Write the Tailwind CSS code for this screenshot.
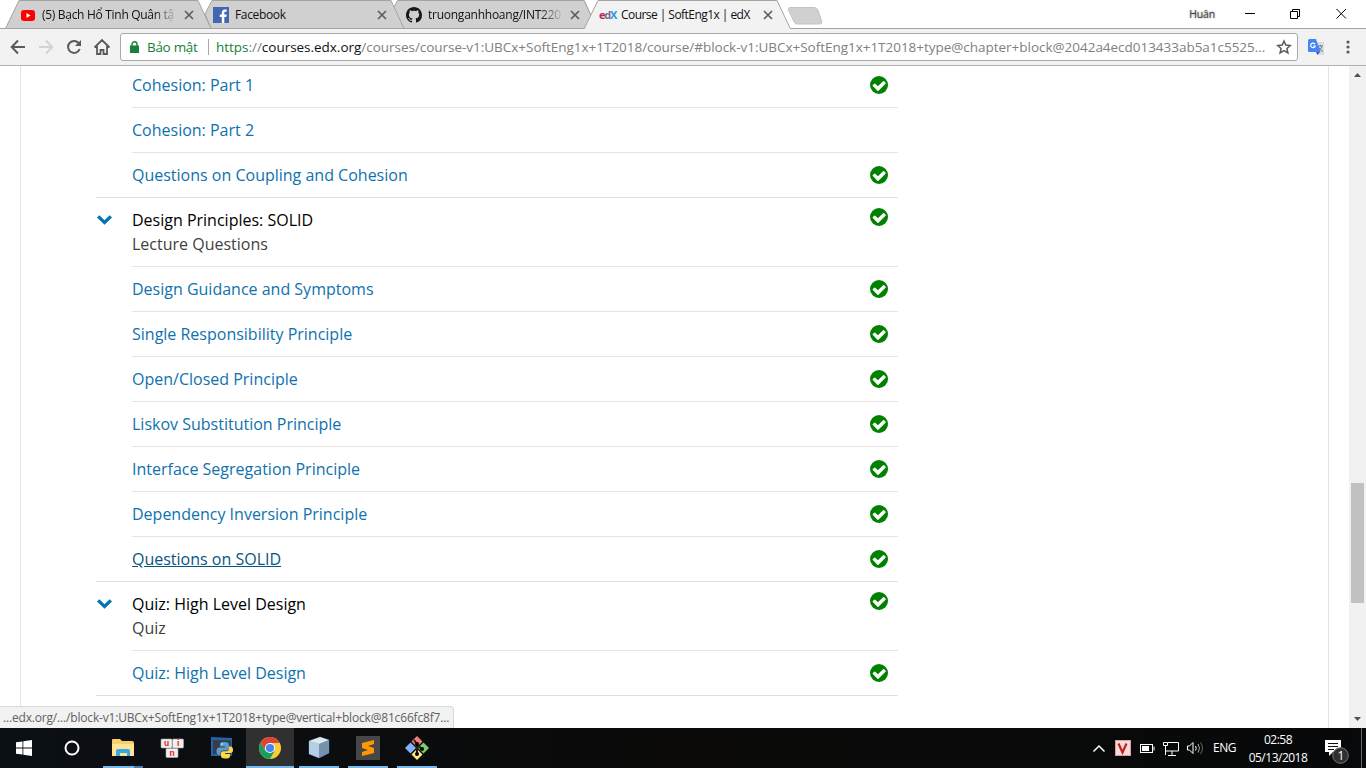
<!DOCTYPE html>
<html lang="en">
<head>
<meta charset="utf-8">
<title>Course | SoftEng1x | edX</title>
<script src="https://cdn.jsdelivr.net/npm/@tailwindcss/browser@4"></script>
</head>
<body class="w-[1366px] h-[768px] overflow-hidden bg-white font-['Open_Sans','Noto_Sans',sans-serif] flex flex-col">
<svg class="hidden">
  <symbol id="done" viewBox="0 0 1536 1536"><circle cx="768" cy="768" r="768" fill="#008100"/><path fill="#fff" d="M1344 606q0-28-18-46l-121-120q-19-19-45-19t-45 19l-438 437-226-226q-19-19-45-19t-45 19l-121 120q-18 18-18 46 0 27 18 45l392 392q19 19 45 19 27 0 46-19l603-603q18-18 18-45z"/></symbol>
  <symbol id="chev" viewBox="0 0 15 10"><path fill="#0075b4" d="M0 2.600L2.300.300 7.500 5.300 12.700.300 15 2.600 7.500 9.700z"/></symbol>
  <symbol id="x" viewBox="0 0 10 10"><path d="M1 1l8 8M9 1L1 9" stroke="#5a5a5a" stroke-width="1.600" fill="none"/></symbol>
</svg>

<!-- Tab strip -->
<header class="relative h-[29px] shrink-0">
  <svg class="absolute left-0 top-0" width="1366" height="29" stroke="#a3a3a3" fill="#d0d0d0">
    <path d="M391.500 28.500L405 .500H584L597 28.500"/>
    <path d="M390.500 14L397.500 .500H584L597 28.500H397.500z"/>
    <path d="M205 14L212 .500H391L404 28.500H211z"/>
    <path d="M5.500 28.500L19 .500H198L211 28.500"/>
    <path d="M0 28.500H1366"/>
    <path d="M584 29L598 .500H777L790.500 29" fill="#f2f2f2"/>
    <path d="M585 28.500H790" stroke="#f2f2f2"/>
    <path d="M790 7.500H814Q817 7.500 818 10L822 22Q822 24 820 24H797Q795 24 794 22L788.500 10Q788 7.500 790 7.500z" stroke="#c4c4c4"/>
  </svg>
  <div class="relative flex h-[29px] text-[12px] leading-[29px] text-[#111] whitespace-nowrap">
    <div class="flex items-center w-[193px] ml-[20px]">
      <svg class="w-4 h-4 shrink-0" viewBox="0 0 16 16"><rect x="1" y="3" width="14" height="11" rx="3" fill="#f00"/><path d="M6.500 6v5l4-2.500z" fill="#fff"/></svg>
      <span class="ml-[6px] w-[136px] tracking-[-0.3px] [mask-image:linear-gradient(to_right,#000_112px,transparent_136px)]">(5) Bạch Hổ Tinh Quân tậ</span>
      <svg class="w-[10px] h-[10px] ml-[6px]"><use href="#x"/></svg>
    </div>
    <div class="flex items-center w-[193px]">
      <svg class="w-4 h-4 shrink-0" viewBox="0 0 16 16"><path fill="#4267b2" d="M0 0h16v16H0z"/><path fill="#fff" d="M8.800 16V10H6.800V7.500h2V5.800C8.800 3.700 10 2.500 12 2.500h1.700v2.200h-1.200c-1 0-1.200.500-1.200 1.200v1.600h2.400L13.300 10h-2v6z"/></svg>
      <span class="ml-[6px] w-[136px] tracking-[-0.35px]">Facebook</span>
      <svg class="w-[10px] h-[10px] ml-[6px]"><use href="#x"/></svg>
    </div>
    <div class="flex items-center w-[193px]">
      <svg class="w-4 h-4 shrink-0" viewBox="0 0 16 16"><path fill="#191717" d="M8 0C3.580 0 0 3.580 0 8c0 3.540 2.290 6.530 5.470 7.590.400.070.550-.170.550-.380 0-.190-.010-.820-.010-1.490-2.010.370-2.530-.490-2.690-.940-.090-.230-.480-.940-.820-1.130-.280-.150-.680-.520-.010-.530.630-.010 1.080.580 1.230.820.720 1.210 1.870.870 2.330.660.070-.520.280-.870.510-1.070-1.780-.200-3.640-.890-3.640-3.950 0-.870.310-1.590.820-2.150-.080-.200-.360-1.020.080-2.120 0 0 .670-.210 2.200.820.640-.180 1.320-.270 2-.270s1.360.090 2 .270c1.530-1.040 2.200-.820 2.200-.820.440 1.100.160 1.920.080 2.120.510.560.820 1.270.820 2.150 0 3.070-1.870 3.750-3.650 3.950.290.250.540.730.540 1.480 0 1.070-.010 1.930-.010 2.200 0 .210.150.460.550.380A8.010 8.010 0 0 0 16 8c0-4.420-3.580-8-8-8z"/></svg>
      <span class="ml-[6px] w-[136px] tracking-[-0.25px] [mask-image:linear-gradient(to_right,#000_112px,transparent_136px)]">truonganhhoang/INT220</span>
      <svg class="w-[10px] h-[10px] ml-[6px]"><use href="#x"/></svg>
    </div>
    <div class="flex items-center w-[193px]">
      <span class="w-4 h-4 leading-[15px] text-[11px] font-bold tracking-[-1.3px] text-[#b72667]">e<span class="text-[#7b6c86]">d</span><span class="text-[#1b9be8]">X</span></span>
      <span class="ml-[6px] w-[136px] tracking-[-0.55px]">Course | SoftEng1x | edX</span>
      <svg class="w-[10px] h-[10px] ml-[6px]"><use href="#x"/></svg>
    </div>
    <div class="flex items-center ml-auto mr-[17px] h-[27px]">
      <span class="text-[10.5px] text-[#444] tracking-[-0.15px] mr-[30px] mt-px [text-shadow:0_0_2px_#777]">Huân</span>
      <svg width="104" height="12" viewBox="0 0 104 12" fill="none" stroke="#000"><path d="M0 5.500h10M45.500 3.500h7v7h-7zM47.500 3V1.500h7v7H53M91.500 1l9.500 9.500M101 1l-9.500 9.500"/></svg>
    </div>
  </div>
</header>

<!-- Toolbar -->
<div class="h-[37px] shrink-0 bg-[#f2f2f2] border-b border-[#b2b2b2] flex items-center">
  <svg width="120" height="36" viewBox="0 29 120 36" fill="none" stroke="#5a5a5a" stroke-width="2">
    <path d="M25 47H12M18 40.500L11.700 47l6.300 6.500"/>
    <path d="M39 47h13M46 40.500l6.300 6.500-6.300 6.500" stroke="#d3d3d3"/>
    <path d="M79 43.500A6 6 0 1 0 79.700 49"/><path d="M81 40v6h-6z" fill="#5a5a5a" stroke="none"/>
    <path d="M94.500 47.500L102 40l7.500 7.500M97 46v8h3.500v-4h3v4h3.500v-8" stroke-width="1.800"/>
  </svg>
  <div class="w-[1178px] h-[28px] bg-white border border-[#a9a9a9] rounded-[3px] flex items-center text-[13.500px] whitespace-nowrap">
    <svg class="ml-[9px]" width="9" height="12" viewBox="0 0 9 12"><path fill="#188038" d="M0 4.500h9V12H0z"/><path d="M2 5V3.200a2.500 2.500 0 0 1 5 0V5" fill="none" stroke="#188038" stroke-width="1.400"/></svg>
    <span class="ml-[8px] w-[52px] text-[#188038] tracking-[-0.3px]">Bảo mật</span>
    <span class="ml-[9px] w-px h-4 bg-[#a8a8a8]"></span>
    <span class="ml-[7px] w-[1050px] text-[#808080] tracking-[-0.025px]"><span class="text-[#188038]">https</span>://<span class="text-[#111]">courses.edx.org</span>/courses/course-v1:UBCx+SoftEng1x+1T2018/course/#block-v1:UBCx+SoftEng1x+1T2018+type@chapter+block@2042a4ecd013433ab5a1c5525...</span>
    <svg class="ml-[10px]" width="16" height="16" viewBox="0 0 16 16"><path d="M8 2l1.800 4.100 4.500.400-3.400 3 1 4.400L8 11.600l-3.900 2.300 1-4.400-3.400-3 4.500-.400z" fill="none" stroke="#5a5a5a" stroke-width="1.500"/></svg>
  </div>
  <svg class="ml-[10px]" width="16" height="16" viewBox="0 0 16 16"><path d="M6 3h10v13H9z" fill="#dcdcdc"/><path d="M0 1.500Q0 0 1.500 0H8l4.500 13H1.500Q0 13 0 11.500z" fill="#4285f4"/><path d="M8 13h4l-2.500 3z" fill="#3b50c5"/><path d="M7 5.200a2.300 2.300 0 1 0 .200 1.800H5.200" stroke="#fff" stroke-width="1.200" fill="none"/><path d="M10 7h5M12.500 6v1M14 7.500q-1 3-3.500 4.500M11 8.500q1 2.500 4 4" stroke="#607d9b" fill="none"/></svg>
  <svg class="ml-[22px]" width="4" height="14" viewBox="0 0 4 14" fill="#5a5a5a"><circle cx="2" cy="2" r="1.600"/><circle cx="2" cy="7" r="1.600"/><circle cx="2" cy="12" r="1.600"/></svg>
</div>

<!-- Page -->
<main class="relative h-[662px] shrink-0 overflow-hidden flex">
  <div class="ml-[20px] w-[1309px] border-x border-[#e3e3e3] pl-[75px]">
    <div class="w-[802px] -mt-[3px] text-[16px] leading-6 text-[#0e72ae]">
      <section class="border-b border-[#e0e0e0]">
        <ul class="ml-[36px] divide-y divide-[#e5e5e5]">
          <li class="h-[45px] flex items-center justify-between pr-[10px]"><a>Cohesion: Part 1</a><svg class="w-[18px] h-[18px]"><use href="#done"/></svg></li>
          <li class="h-[45px] flex items-center"><a>Cohesion: Part 2</a></li>
          <li class="h-[44px] flex items-center justify-between pr-[10px]"><a>Questions on Coupling and Cohesion</a><svg class="w-[18px] h-[18px]"><use href="#done"/></svg></li>
        </ul>
      </section>
      <section class="border-b border-[#e0e0e0]">
        <div class="flex h-[68px] pt-[10px]">
          <svg class="w-[15px] h-[10px] mt-[7px] ml-[1px] mr-[20px]"><use href="#chev"/></svg>
          <div class="flex-1 text-[#414141]"><h3 class="text-black">Design Principles: SOLID</h3><p>Lecture Questions</p></div>
          <svg class="w-[18px] h-[18px] mr-[10px]"><use href="#done"/></svg>
        </div>
        <ul class="ml-[36px] border-t border-[#e5e5e5] divide-y divide-[#e5e5e5]">
          <li class="h-[45px] flex items-center justify-between pr-[10px]"><a>Design Guidance and Symptoms</a><svg class="w-[18px] h-[18px]"><use href="#done"/></svg></li>
          <li class="h-[45px] flex items-center justify-between pr-[10px]"><a>Single Responsibility Principle</a><svg class="w-[18px] h-[18px]"><use href="#done"/></svg></li>
          <li class="h-[45px] flex items-center justify-between pr-[10px]"><a>Open/Closed Principle</a><svg class="w-[18px] h-[18px]"><use href="#done"/></svg></li>
          <li class="h-[45px] flex items-center justify-between pr-[10px]"><a>Liskov Substitution Principle</a><svg class="w-[18px] h-[18px]"><use href="#done"/></svg></li>
          <li class="h-[45px] flex items-center justify-between pr-[10px]"><a>Interface Segregation Principle</a><svg class="w-[18px] h-[18px]"><use href="#done"/></svg></li>
          <li class="h-[45px] flex items-center justify-between pr-[10px]"><a>Dependency Inversion Principle</a><svg class="w-[18px] h-[18px]"><use href="#done"/></svg></li>
          <li class="h-[44px] flex items-center justify-between pr-[10px]"><a class="underline text-[#065683]">Questions on SOLID</a><svg class="w-[18px] h-[18px]"><use href="#done"/></svg></li>
        </ul>
      </section>
      <section class="border-b border-[#e0e0e0]">
        <div class="flex h-[68px] pt-[10px]">
          <svg class="w-[15px] h-[10px] mt-[7px] ml-[1px] mr-[20px]"><use href="#chev"/></svg>
          <div class="flex-1 text-[#414141]"><h3 class="text-black">Quiz: High Level Design</h3><p>Quiz</p></div>
          <svg class="w-[18px] h-[18px] mr-[10px]"><use href="#done"/></svg>
        </div>
        <ul class="ml-[36px] border-t border-[#e5e5e5]">
          <li class="h-[44px] flex items-center justify-between pr-[10px]"><a>Quiz: High Level Design</a><svg class="w-[18px] h-[18px]"><use href="#done"/></svg></li>
        </ul>
      </section>
    </div>
  </div>
  <div class="ml-auto w-[17px] bg-[#f1f1f1] flex flex-col items-center">
    <svg class="mt-[7px]" width="7" height="4"><path d="M0 4L3.500 0 7 4z" fill="#505050"/></svg>
    <div class="mt-[406px] w-[13px] h-[120px] bg-[#c1c1c1]"></div>
    <svg class="mt-auto mb-[7px]" width="7" height="4"><path d="M0 0h7L3.500 4z" fill="#505050"/></svg>
  </div>
  <div class="absolute left-0 bottom-0 w-[454px] h-[22px] bg-[#f2f2f2] border-t border-r border-[#d8d8d8] rounded-tr-[4px] pl-[3px] text-[12px] leading-[22px] text-[#606060] whitespace-nowrap tracking-[-0.175px]">...edx.org/.../block-v1:UBCx+SoftEng1x+1T2018+type@vertical+block@81c66fc8f7...</div>
</main>

<!-- Taskbar -->
<footer class="h-[40px] shrink-0 bg-gradient-to-r from-[#0b1015] via-[#0a0908] to-[#07090a] flex text-white">
  <div class="w-12 flex items-center justify-center"><svg width="16" height="16" viewBox="0 0 16 16" fill="#fff"><path d="M0 2.300L6.500 1.400V7.600H0zM7.300 1.300L16 0V7.600H7.300zM0 8.400H6.500V14.600L0 13.700zM7.300 8.400H16V16L7.300 14.700z"/></svg></div>
  <div class="w-12 flex items-center justify-center"><svg width="16" height="16"><circle cx="8" cy="8" r="6.500" fill="none" stroke="#fff" stroke-width="2"/></svg></div>
  <div class="w-[54px] relative flex items-center justify-center"><svg class="mt-[-1px]" width="22" height="20" viewBox="0 0 22 20"><path d="M0 2Q0 1 1 1H8L10 3H20Q22 3 22 5V18H0z" fill="#f7cf6b"/><path d="M0 6H22V18H0z" fill="#ffe394"/><path d="M4 18V13Q4 11 6 11H16Q18 11 18 13V18H15V15H8V18z" fill="#35a9e4"/></svg><span class="absolute left-[7px] bottom-0 w-[40px] h-[2px] bg-[linear-gradient(to_right,#76b9ed_31px,#4e7ea5_31px)]"></span></div>
  <div class="w-[44px] flex items-center justify-center"><svg width="24" height="20" viewBox="0 0 24 20"><g fill="#efefef" stroke="#aaa" stroke-width=".6"><rect x="1" y="1" width="11" height="9" rx="1"/><rect x="12.500" y="1" width="11" height="9" rx="1"/><rect x="6" y="10.500" width="12" height="9" rx="1"/></g><g fill="#e02424" class="font-['Liberation_Sans']" font-weight="bold" font-size="8.500"><text x="4" y="8">u</text><text x="17" y="8">i</text><text x="9.500" y="17.500">n</text></g></svg></div>
  <div class="w-[52px] flex items-center justify-center"><svg class="ml-[3px] mt-[-2px]" width="24" height="24" viewBox="0 0 24 24"><path d="M1 2l21 1v18L1 21z" fill="#2463a8"/><path d="M3 5l18 .500V19L3 19z" fill="#333e48"/><path d="M14 7c-4 0-4 1.500-4 3v1.500h5v1H9c-2 0-2.500 2-2.500 4s1 3.500 2.500 3.500h1.500v-2c0-1.500 1-2.500 2.500-2.500h4c1.500 0 2-1 2-2.200V10c0-2-1-3-5-3z" fill="#5b9bd0"/><path d="M16 23.500c4 0 4-1.500 4-3V19h-5v-1h5.500c2 0 2.500-1.500 2.500-3s-.500-3.500-2.500-3.500H19v2.300c0 1.500-1 2.500-2.500 2.500h-3.500c-1.500 0-2 1-2 2v2.500c0 2 1 2.700 5 2.700z" fill="#ffd845"/><circle cx="12" cy="9" r=".8" fill="#fff"/></svg></div>
  <div class="w-[48px] bg-[#303030] border-b-2 border-[#76b9ed] flex items-center justify-center"><svg class="mt-[1px]" width="22" height="22" viewBox="-11 -11 22 22"><circle r="11" fill="#f9cc3a"/><path d="M-9.500-5.500A11 11 0 0 0 0 11L4.700 2.700-4.700 2.700z" fill="#1a9f5b"/><path d="M-9.500-5.500A11 11 0 0 1 9.500-5.500L9.800-5H0L-4.300 3z" fill="#dc4437"/><circle r="5.100" fill="#fff"/><circle r="4.100" fill="#4285f4"/></svg></div>
  <div class="w-[40px] ml-[5px] border-b-2 border-[#76b9ed] flex items-center justify-center"><svg class="mt-[1px]" width="22" height="23" viewBox="0 0 22 23"><path d="M1 5L12 1 21 4V17L11 22 1 18z" fill="#8ba6c4" stroke="#223d80"/><path d="M1 5L12 1 21 4 11 8z" fill="#dcebe5"/><path d="M1 5L11 8V22L1 18z" fill="#b5cde5"/><path d="M11 8L21 4V17L11 22z" fill="#7891ad"/></svg></div>
  <div class="w-[40px] ml-[9px] border-b-2 border-[#76b9ed] flex items-center justify-center"><svg class="mt-[1px]" width="24" height="24" viewBox="0 0 24 24"><rect width="24" height="24" rx="1" fill="#474747"/><path d="M6 7l12-3v4l-6 2 6 2v5L6 20v-4l6-2-6-2z" fill="#ff9800"/></svg></div>
  <div class="w-[40px] ml-[9px] border-b-2 border-[#76b9ed] flex items-center justify-center"><svg class="mt-[1px]" width="24" height="24" viewBox="0 0 24 24"><path d="M12 0l5.500 5.500L12 11 6.500 5.500z" fill="#f47c7c"/><path d="M5.500 6.500L11 12l-5.500 5.500L0 12z" fill="#80b3ff"/><path d="M18.500 6.500L24 12l-5.500 5.500L13 12z" fill="#80cc66"/><path d="M12 13l5.500 5.500L12 24l-5.500-5.500z" fill="#ffe680"/><path d="M9 4l3 4v10M12 9l5 4" stroke="#2b1d0e" stroke-width="2" fill="none"/><circle cx="12" cy="8" r="2"/><circle cx="12" cy="18" r="2"/><circle cx="17" cy="13" r="2"/></svg></div>
  <div class="ml-auto flex items-center">
    <svg width="112" height="40" viewBox="1092 728 112 40" fill="none" stroke="#fff">
      <path d="M1093.500 751.500l5.500-5.500 5.500 5.500" stroke-width="1.500"/>
      <rect x="1115.500" y="740.500" width="15" height="15" fill="#f3dcdc" stroke="#e49a9a"/><path d="M1118.500 743.500l4 9 4-9" stroke="#c42020" stroke-width="2.200"/>
      <rect x="1140.500" y="744.500" width="12" height="8"/><path d="M1142 746h7v5h-7z" fill="#fff" stroke="none"/><path d="M1154 746.500v4"/>
      <path d="M1168 742.500h10.500v8.500h-13v-4M1172 751v4M1168 755.500h8M1163.500 742.500h4v3h-4zM1165.500 746v9"/>
      <path d="M1187.500 746v4h2l3.500 3.500v-11l-3.500 3.500z"/><path d="M1195.500 746q1.500 2 0 4.500"/><path d="M1198 744q3 4 0 8.500" stroke="#aaa"/><path d="M1200.500 742.500q4 5.500 0 11.500" stroke="#666"/>
    </svg>
    <span class="ml-[9px] w-[24px] text-[12px] tracking-[-0.5px]">ENG</span>
    <div class="w-[80px] ml-px text-center text-[12px] leading-[18px] tracking-[-0.5px] mt-[1px]"><div>02:58</div><div>05/13/2018</div></div>
    <svg class="ml-[6px]" width="42" height="40" viewBox="1324 728 42 40"><path d="M1325 740h16v12h-8l-4 4v-4h-4z" fill="#fff"/><path d="M1328 743.500h10M1328 746.500h10M1328 749.500h6" stroke="#111"/><circle cx="1340.500" cy="755.500" r="7.800" fill="#303030" stroke="#777"/><text x="1337.500" y="760" fill="#fff" font-size="12">1</text><path d="M1361.500 728v40" stroke="#666"/></svg>
  </div>
</footer>
</body>
</html>
